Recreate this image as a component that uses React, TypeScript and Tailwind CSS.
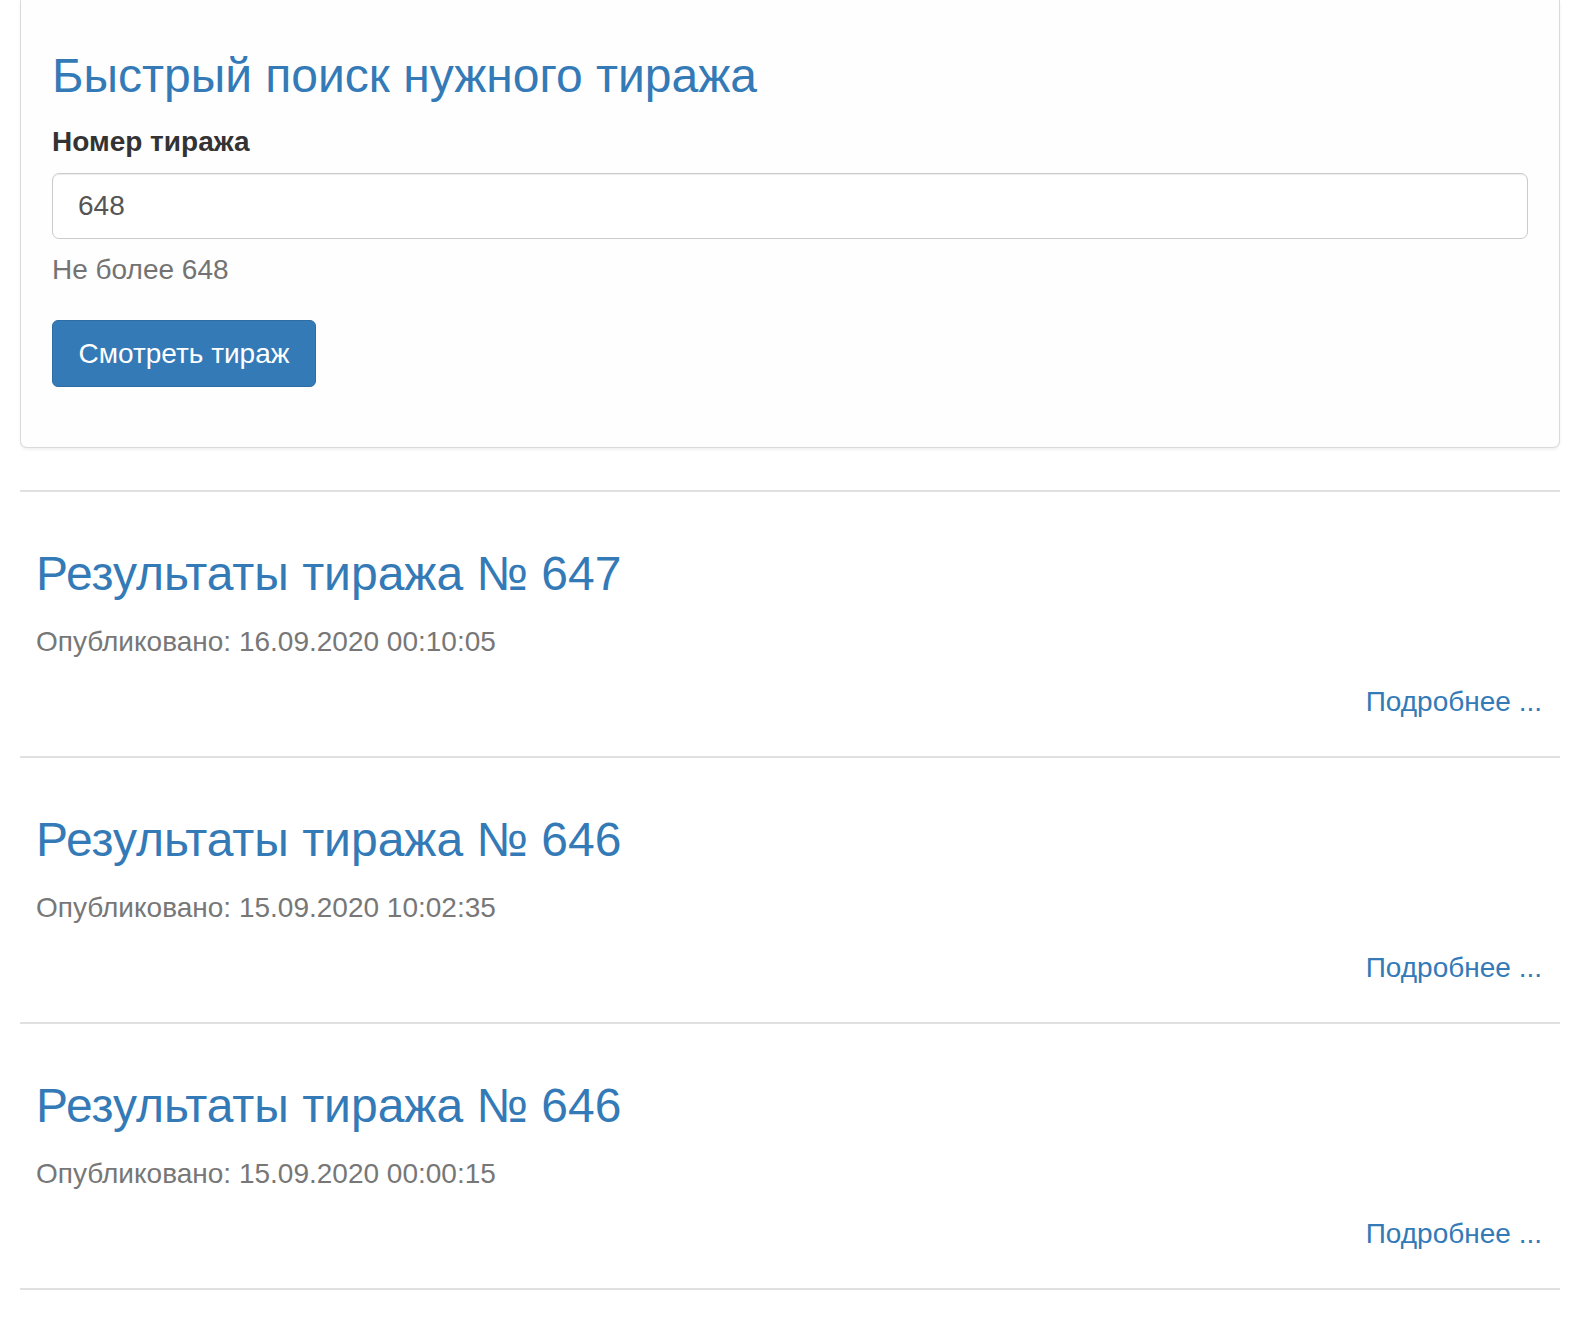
import React from "react";

const items = [
  { n: 647, date: "16.09.2020 00:10:05" },
  { n: 646, date: "15.09.2020 10:02:35" },
  { n: 646, date: "15.09.2020 00:00:15" },
];

export default function App() {
  return (
    <div
      className="min-h-[1324px] w-full bg-white px-[20px]"
      style={{ fontFamily: '"Liberation Sans", Arial, Helvetica, sans-serif' }}
    >
      <div className="rounded-b-[7px] border border-t-0 border-[#dadada] bg-[#fefefe] px-[31px] pb-[60px] pt-[50px] shadow-[0_2px_3px_rgba(0,0,0,0.06)]">
        <h2 className="text-[48px] leading-[52px] text-[#337ab7]">
          Быстрый поиск нужного тиража
        </h2>
        <label className="mt-[24px] block text-[28px] font-bold leading-[32px] text-[#333]">
          Номер тиража
        </label>
        <input
          type="text"
          defaultValue="648"
          className="mt-[15px] block h-[66px] w-full rounded-[7px] border border-[#cbcbcb] bg-white px-[25px] text-[28px] text-[#555] shadow-[inset_0_1px_1px_rgba(0,0,0,0.075)] outline-none"
        />
        <p className="mt-[15px] text-[28px] leading-[32px] text-[#737373]">
          Не более 648
        </p>
        <button className="mt-[34px] flex h-[67px] w-[264px] items-center justify-center rounded-[6px] border border-[#2e6da4] bg-[#337ab7] text-[28px] leading-[32px] text-white">
          Смотреть тираж
        </button>
      </div>

      <div className="mt-[42px]">
        {items.map((it, i) => (
          <div
            key={i}
            className="border-t-2 border-[#e0e0e0] pl-[16px] pr-[18px] pt-[56px] pb-[38px]"
          >
            <h2 className="text-[48px] leading-[52px] text-[#337ab7]">
              Результаты тиража № {it.n}
            </h2>
            <p className="mt-[26px] text-[28px] leading-[32px] text-[#777]">
              Опубликовано: {it.date}
            </p>
            <div className="mt-[28px] flex justify-end">
              <a className="text-[28px] leading-[32px] text-[#337ab7]" href="#">
                Подробнее ...
              </a>
            </div>
          </div>
        ))}
        <div className="border-t-2 border-[#e0e0e0]" />
      </div>
    </div>
  );
}
